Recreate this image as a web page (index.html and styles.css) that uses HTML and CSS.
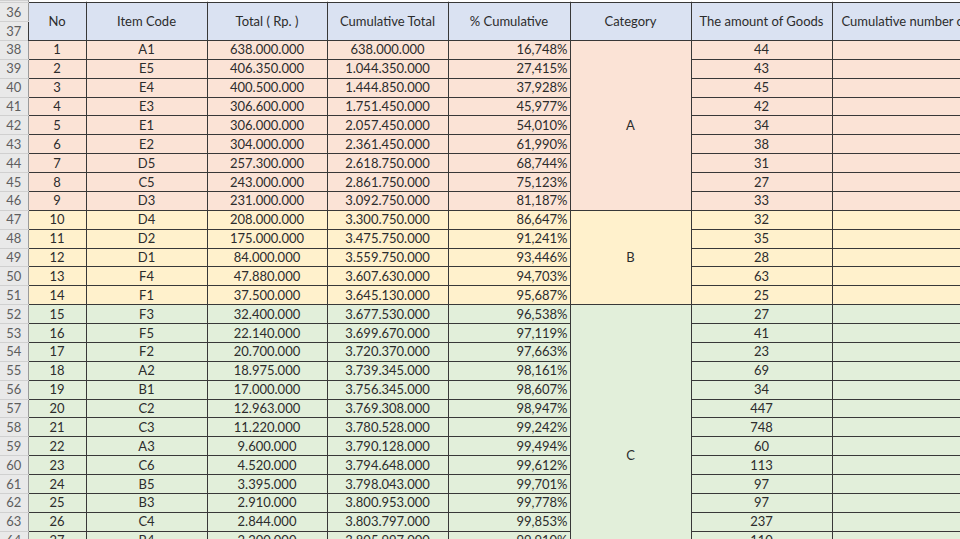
FILE: index.html
```html
<!DOCTYPE html>
<html>
<head>
<meta charset="utf-8">
<link rel="stylesheet" href="styles.css">
</head>
<body>
<table class="sheet">
  <colgroup>
    <col class="w-rh"><col class="w-no"><col class="w-code"><col class="w-total"><col class="w-cum"><col class="w-pct"><col class="w-cat"><col class="w-amt"><col class="w-last">
  </colgroup>
  <tr class="r-top"><th class="rh"></th><td></td><td></td><td></td><td></td><td></td><td></td><td></td><td></td></tr>
  <tr class="hdr"><th class="rh">36</th><th class="ch" rowspan="2">No</th><th class="ch" rowspan="2">Item Code</th><th class="ch" rowspan="2">Total ( Rp. )</th><th class="ch" rowspan="2">Cumulative Total</th><th class="ch" rowspan="2">% Cumulative</th><th class="ch" rowspan="2">Category</th><th class="ch" rowspan="2">The amount of Goods</th><th class="ch ch-left" rowspan="2">Cumulative number of Goods</th></tr>
  <tr class="hdr"><th class="rh">37</th></tr>
  <tr class="a"><th class="rh">38</th><td>1</td><td>A1</td><td>638.000.000</td><td>638.000.000</td><td class="pct">16,748%</td><td class="cat cat-a" rowspan="9">A</td><td>44</td><td></td></tr>
  <tr class="a"><th class="rh">39</th><td>2</td><td>E5</td><td>406.350.000</td><td>1.044.350.000</td><td class="pct">27,415%</td><td>43</td><td></td></tr>
  <tr class="a"><th class="rh">40</th><td>3</td><td>E4</td><td>400.500.000</td><td>1.444.850.000</td><td class="pct">37,928%</td><td>45</td><td></td></tr>
  <tr class="a"><th class="rh">41</th><td>4</td><td>E3</td><td>306.600.000</td><td>1.751.450.000</td><td class="pct">45,977%</td><td>42</td><td></td></tr>
  <tr class="a"><th class="rh">42</th><td>5</td><td>E1</td><td>306.000.000</td><td>2.057.450.000</td><td class="pct">54,010%</td><td>34</td><td></td></tr>
  <tr class="a"><th class="rh">43</th><td>6</td><td>E2</td><td>304.000.000</td><td>2.361.450.000</td><td class="pct">61,990%</td><td>38</td><td></td></tr>
  <tr class="a"><th class="rh">44</th><td>7</td><td>D5</td><td>257.300.000</td><td>2.618.750.000</td><td class="pct">68,744%</td><td>31</td><td></td></tr>
  <tr class="a"><th class="rh">45</th><td>8</td><td>C5</td><td>243.000.000</td><td>2.861.750.000</td><td class="pct">75,123%</td><td>27</td><td></td></tr>
  <tr class="a"><th class="rh">46</th><td>9</td><td>D3</td><td>231.000.000</td><td>3.092.750.000</td><td class="pct">81,187%</td><td>33</td><td></td></tr>
  <tr class="b"><th class="rh">47</th><td>10</td><td>D4</td><td>208.000.000</td><td>3.300.750.000</td><td class="pct">86,647%</td><td class="cat cat-b" rowspan="5">B</td><td>32</td><td></td></tr>
  <tr class="b"><th class="rh">48</th><td>11</td><td>D2</td><td>175.000.000</td><td>3.475.750.000</td><td class="pct">91,241%</td><td>35</td><td></td></tr>
  <tr class="b"><th class="rh">49</th><td>12</td><td>D1</td><td>84.000.000</td><td>3.559.750.000</td><td class="pct">93,446%</td><td>28</td><td></td></tr>
  <tr class="b"><th class="rh">50</th><td>13</td><td>F4</td><td>47.880.000</td><td>3.607.630.000</td><td class="pct">94,703%</td><td>63</td><td></td></tr>
  <tr class="b"><th class="rh">51</th><td>14</td><td>F1</td><td>37.500.000</td><td>3.645.130.000</td><td class="pct">95,687%</td><td>25</td><td></td></tr>
  <tr class="c"><th class="rh">52</th><td>15</td><td>F3</td><td>32.400.000</td><td>3.677.530.000</td><td class="pct">96,538%</td><td class="cat cat-c" rowspan="16">C</td><td>27</td><td></td></tr>
  <tr class="c"><th class="rh">53</th><td>16</td><td>F5</td><td>22.140.000</td><td>3.699.670.000</td><td class="pct">97,119%</td><td>41</td><td></td></tr>
  <tr class="c"><th class="rh">54</th><td>17</td><td>F2</td><td>20.700.000</td><td>3.720.370.000</td><td class="pct">97,663%</td><td>23</td><td></td></tr>
  <tr class="c"><th class="rh">55</th><td>18</td><td>A2</td><td>18.975.000</td><td>3.739.345.000</td><td class="pct">98,161%</td><td>69</td><td></td></tr>
  <tr class="c"><th class="rh">56</th><td>19</td><td>B1</td><td>17.000.000</td><td>3.756.345.000</td><td class="pct">98,607%</td><td>34</td><td></td></tr>
  <tr class="c"><th class="rh">57</th><td>20</td><td>C2</td><td>12.963.000</td><td>3.769.308.000</td><td class="pct">98,947%</td><td>447</td><td></td></tr>
  <tr class="c"><th class="rh">58</th><td>21</td><td>C3</td><td>11.220.000</td><td>3.780.528.000</td><td class="pct">99,242%</td><td>748</td><td></td></tr>
  <tr class="c"><th class="rh">59</th><td>22</td><td>A3</td><td>9.600.000</td><td>3.790.128.000</td><td class="pct">99,494%</td><td>60</td><td></td></tr>
  <tr class="c"><th class="rh">60</th><td>23</td><td>C6</td><td>4.520.000</td><td>3.794.648.000</td><td class="pct">99,612%</td><td>113</td><td></td></tr>
  <tr class="c"><th class="rh">61</th><td>24</td><td>B5</td><td>3.395.000</td><td>3.798.043.000</td><td class="pct">99,701%</td><td>97</td><td></td></tr>
  <tr class="c"><th class="rh">62</th><td>25</td><td>B3</td><td>2.910.000</td><td>3.800.953.000</td><td class="pct">99,778%</td><td>97</td><td></td></tr>
  <tr class="c"><th class="rh">63</th><td>26</td><td>C4</td><td>2.844.000</td><td>3.803.797.000</td><td class="pct">99,853%</td><td>237</td><td></td></tr>
  <tr class="c"><th class="rh">64</th><td>27</td><td>B4</td><td>2.200.000</td><td>3.805.997.000</td><td class="pct">99,910%</td><td>110</td><td></td></tr>
  <tr class="c"><th class="rh">65</th><td>28</td><td></td><td></td><td></td><td class="pct"></td><td></td><td></td></tr>
  <tr class="c"><th class="rh">66</th><td>29</td><td></td><td></td><td></td><td class="pct"></td><td></td><td></td></tr>
  <tr class="c"><th class="rh">67</th><td>30</td><td></td><td></td><td></td><td class="pct"></td><td></td><td></td></tr>
</table>
</body>
</html>
```
FILE: styles.css
```css
html, body {
  margin: 0;
  padding: 0;
  height: 539px;
  overflow: hidden;
  background: #ffffff;
}

.sheet {
  border-collapse: collapse;
  table-layout: fixed;
  width: 992px;
  font-family: Lato, "Liberation Sans", sans-serif;
  font-size: 13px;
  line-height: 15px;
  color: #2c2c2c;
}

.w-rh { width: 28px; }
.w-no { width: 58px; }
.w-code { width: 121px; }
.w-total { width: 120px; }
.w-cum { width: 121px; }
.w-pct { width: 122px; }
.w-cat { width: 121px; }
.w-amt { width: 141px; }
.w-last { width: 160px; }

.sheet tr { height: 18.88px; }
.sheet tr.r-top { height: 2.2px; }

.sheet td,
.sheet .ch {
  border: 1px solid #383838;
  padding: 0 3px;
  text-align: center;
  vertical-align: middle;
  white-space: nowrap;
  overflow: hidden;
  font-weight: normal;
}

.sheet .rh {
  background: #e9e9e9;
  color: #5e5e5e;
  font-weight: normal;
  font-size: 13px;
  padding: 0;
  text-align: center;
  border-top: 1px solid #d0d0d0;
  border-bottom: 1px solid #d0d0d0;
  border-left: 0;
  border-right: 1px solid #9a9a9a;
}

.r-top td {
  padding: 0;
  background: #ffffff;
  border-top: 0;
  border-left: 1px solid #c8c8c8;
  border-right: 1px solid #c8c8c8;
  border-bottom: 1px solid #383838;
}

.ch {
  background: #dae2f2;
}

.sheet .ch-left {
  text-align: left;
  padding-left: 9px;
}

.a td { background: #fbe3d6; }
.b td { background: #fff1cc; }
.c td { background: #e2efda; }

.sheet td.pct {
  text-align: right;
  padding-right: 2px;
}

.sheet td.cat {
  vertical-align: middle;
}
.sheet td.cat-a { background: #fbe3d6; }
.sheet td.cat-b { background: #fff1cc; }
.sheet td.cat-c { background: #e2efda; }
```
